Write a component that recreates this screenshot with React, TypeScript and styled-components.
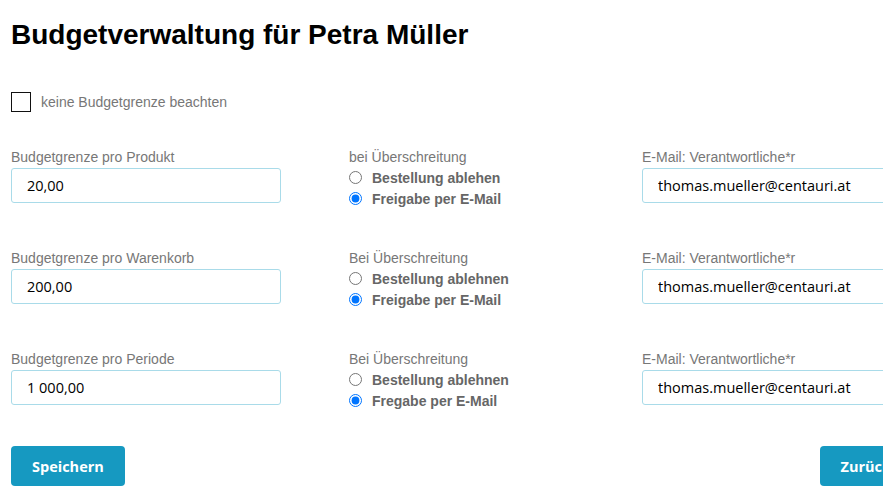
import React, { useState } from 'react';
import styled, { createGlobalStyle } from 'styled-components';

interface BudgetRow {
  label: string;
  exceedLabel: string;
  rejectLabel: string;
  approveLabel: string;
  value: string;
  email: string;
}

const rows: Array<BudgetRow> = [
  {
    label: 'Budgetgrenze pro Produkt',
    exceedLabel: 'bei Überschreitung',
    rejectLabel: 'Bestellung ablehen',
    approveLabel: 'Freigabe per E-Mail',
    value: '20,00',
    email: 'thomas.mueller@centauri.at',
  },
  {
    label: 'Budgetgrenze pro Warenkorb',
    exceedLabel: 'Bei Überschreitung',
    rejectLabel: 'Bestellung ablehnen',
    approveLabel: 'Freigabe per E-Mail',
    value: '200,00',
    email: 'thomas.mueller@centauri.at',
  },
  {
    label: 'Budgetgrenze pro Periode',
    exceedLabel: 'Bei Überschreitung',
    rejectLabel: 'Bestellung ablehnen',
    approveLabel: 'Fregabe per E-Mail',
    value: '1 000,00',
    email: 'thomas.mueller@centauri.at',
  },
];

const App: React.FC = () => {
  const [ignoreBudget, setIgnoreBudget] = useState<boolean>(false);
  const [modes, setModes] = useState<Array<string>>(['mail', 'mail', 'mail']);

  const setMode = (index: number, mode: string) => {
    setModes(modes.map((m, i) => (i === index ? mode : m)));
  };

  return (
    <>
      <GlobalStyle />
      <Page>
        <Title>Budgetverwaltung für Petra Müller</Title>

        <CheckRow onClick={() => setIgnoreBudget(!ignoreBudget)}>
          <CheckBox $checked={ignoreBudget}>{ignoreBudget ? '✓' : ''}</CheckBox>
          <CheckLabel>keine Budgetgrenze beachten</CheckLabel>
        </CheckRow>

        {rows.map((row, index) => (
          <Row key={`row-${index}`}>
            <Field>
              <FieldLabel>{row.label}</FieldLabel>
              <TextInput defaultValue={row.value} />
            </Field>
            <Field>
              <FieldLabel>{row.exceedLabel}</FieldLabel>
              <RadioLine>
                <Radio
                  type="radio"
                  name={`mode-${index}`}
                  checked={modes[index] === 'reject'}
                  onChange={() => setMode(index, 'reject')}
                />
                {row.rejectLabel}
              </RadioLine>
              <RadioLine>
                <Radio
                  type="radio"
                  name={`mode-${index}`}
                  checked={modes[index] === 'mail'}
                  onChange={() => setMode(index, 'mail')}
                />
                {row.approveLabel}
              </RadioLine>
            </Field>
            <Field>
              <FieldLabel>E-Mail: Verantwortliche*r</FieldLabel>
              <TextInput defaultValue={row.email} />
            </Field>
          </Row>
        ))}

        <ButtonBar>
          <Button>Speichern</Button>
          <Button>Zurück</Button>
        </ButtonBar>
      </Page>
    </>
  );
};

export default App;

const GlobalStyle = createGlobalStyle`
  html, body {
    margin: 0;
    padding: 0;
    background: #fff;
    overflow: hidden;
  }
  body {
    font-family: "Liberation Sans", Arial, sans-serif;
  }
`;

const Page = styled.div`
  width: 901px;
  padding: 20px 11px 0;
`;

const Title = styled.h1`
  margin: 0;
  font-size: 28px;
  line-height: 30px;
  font-weight: bold;
  color: #000;
`;

const CheckRow = styled.label`
  display: flex;
  align-items: center;
  gap: 10px;
  margin-top: 42px;
  cursor: pointer;
`;

const CheckBox = styled.span<{ $checked: boolean }>`
  box-sizing: border-box;
  width: 20px;
  height: 20px;
  border: 1.5px solid #111;
  display: flex;
  align-items: center;
  justify-content: center;
  font-size: 14px;
  color: ${(p) => (p.$checked ? '#1699c1' : 'transparent')};
`;

const CheckLabel = styled.span`
  font-size: 14px;
  color: #777;
`;

const Row = styled.div`
  display: grid;
  grid-template-columns: 338px 293px 270px;
  margin-top: 37px;

  & + & {
    margin-top: 40px;
  }
`;

const Field = styled.div`
  display: flex;
  flex-direction: column;
`;

const FieldLabel = styled.div`
  font-size: 14px;
  line-height: 16px;
  color: #777;
  margin-bottom: 3px;
`;

const TextInput = styled.input`
  box-sizing: border-box;
  width: 270px;
  height: 35px;
  padding: 0 15px;
  border: 1px solid #a9dbe9;
  border-radius: 3px;
  font-family: "Open Sans", sans-serif;
  font-size: 14.5px;
  color: #000;
  outline: none;
`;

const RadioLine = styled.label`
  display: flex;
  align-items: center;
  height: 21px;
  margin-top: -1px;
  margin-bottom: 1px;
  font-size: 14px;
  font-weight: bold;
  color: #666;
  cursor: pointer;
`;

const Radio = styled.input`
  width: 13px;
  height: 13px;
  margin: 0 10px 0 0;
`;

const ButtonBar = styled.div`
  display: flex;
  justify-content: space-between;
  margin-top: 34px;
`;

const Button = styled.button`
  height: 40px;
  padding: 0 21px;
  border: none;
  border-radius: 4px;
  background: #1699c1;
  color: #fff;
  font-family: "Open Sans", sans-serif;
  font-size: 14.5px;
  font-weight: bold;
  cursor: pointer;
`;
